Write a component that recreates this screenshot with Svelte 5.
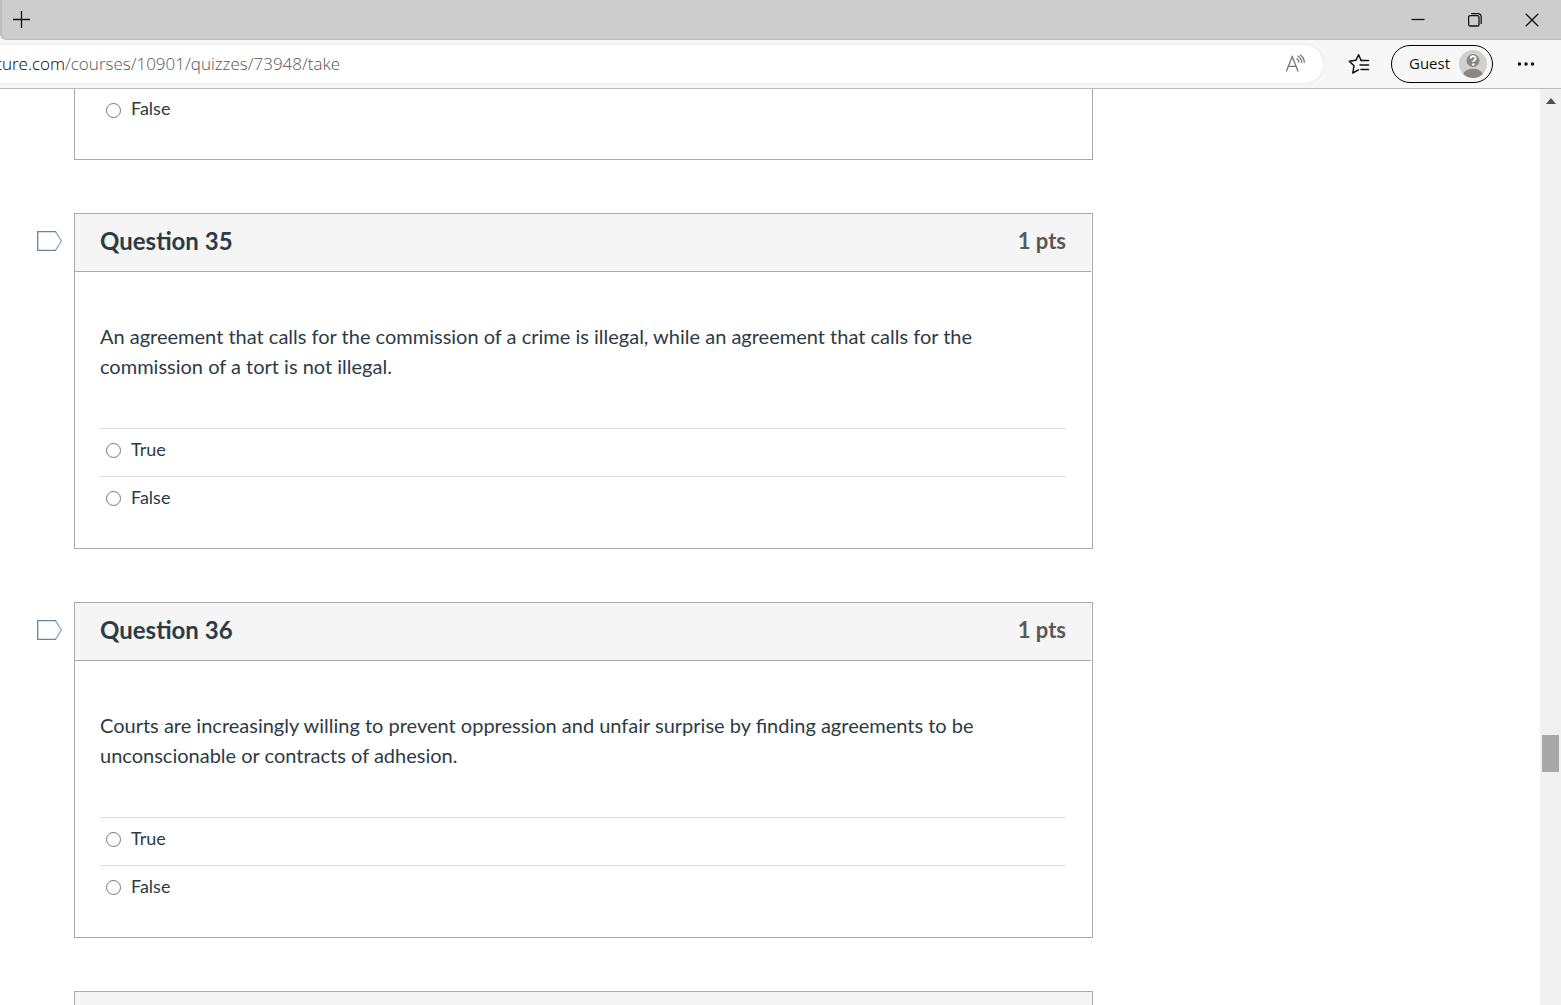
<script>
    let questions = $state([
        {
            id: 35,
            points: 1,
            text: "An agreement that calls for the commission of a crime is illegal, while an agreement that calls for the commission of a tort is not illegal.",
            answer: null,
            flagged: false,
        },
        {
            id: 36,
            points: 1,
            text: "Courts are increasingly willing to prevent oppression and unfair surprise by finding agreements to be unconscionable or contracts of adhesion.",
            answer: null,
            flagged: false,
        },
    ]);

    let previousAnswer = $state(null);
    const options = ["True", "False"];
</script>

<div class="window">
    <header class="title-bar">
        <button class="new-tab" aria-label="New tab">
            <svg width="18" height="18" viewBox="0 0 18 18"><path d="M8.5 0v17M0 8.5h17" /></svg>
        </button>
        <div class="window-controls">
            <button aria-label="Minimize">
                <svg width="14" height="14" viewBox="0 0 14 14"><path d="M0.5 6.5h13" /></svg>
            </button>
            <button aria-label="Restore">
                <svg width="14" height="14" viewBox="0 0 14 14">
                    <rect x="0.6" y="2.6" width="10.4" height="10.4" rx="1.6" />
                    <path d="M3 0.7h7.2a3 3 0 0 1 3 3v7.3" />
                </svg>
            </button>
            <button aria-label="Close">
                <svg width="14" height="14" viewBox="0 0 14 14"><path d="M0.7 0.7l12.6 12.6M13.3 0.7L0.7 13.3" /></svg>
            </button>
        </div>
    </header>

    <div class="toolbar">
        <div class="address">
            <div class="host"><span>ture.com</span></div>
            <div class="path">/courses/10901/quizzes/73948/take</div>
            <button class="read-aloud" aria-label="Read aloud">
                <svg width="22" height="20" viewBox="0 0 22 20">
                    <path d="M1.3 17.5L7.2 2.5l5.9 15M3.3 12.3h7.8" />
                    <path d="M11.6 4.4c1.5 1 2.3 2.4 2.4 4.2M12.6 1.8c2.6 1.6 4 3.8 4.2 6.8M15 0.8c2.8 1.8 4.3 4.6 4.4 8" />
                </svg>
            </button>
        </div>
        <button class="favorites" aria-label="Favorites">
            <svg width="22" height="22" viewBox="0 0 22 22">
                <path d="M13.2 7.5L10.6 1.8 7.8 7.3 1.3 8.2l4.7 4.6L4.8 20l5.6-3.1" />
                <path d="M13.2 7.5H20.5M12 12h8.5M13 16.5h7.5" />
            </svg>
        </button>
        <button class="profile">
            <span>Guest</span>
            <svg width="28" height="28" viewBox="0 0 28 28">
                <circle cx="14" cy="14" r="14" fill="#d2d0ce" />
                <circle cx="14" cy="10.5" r="6.5" fill="#8a8785" />
                <path d="M4.2 24a10 6.4 0 0 1 19.6 0A14 14 0 0 1 4.2 24z" fill="#8a8785" />
                <path d="M11.6 8.6c0-3.2 5-3.2 5-.2 0 1.8-2.4 1.8-2.4 3.6" fill="none" stroke="#fff" stroke-width="1.9" />
                <circle cx="14.2" cy="14.4" r="1.2" fill="#fff" />
            </svg>
        </button>
        <button class="menu" aria-label="Settings and more">
            <svg width="18" height="4" viewBox="0 0 18 4">
                <circle cx="2.5" cy="2" r="1.7" />
                <circle cx="9" cy="2" r="1.7" />
                <circle cx="15.5" cy="2" r="1.7" />
            </svg>
        </button>
    </div>

    <div class="viewport">
        <main class="quiz">
            <section class="question previous">
                <label class="answer">
                    <input type="radio" name="question-34" value="False" bind:group={previousAnswer} />
                    False
                </label>
            </section>

            {#each questions as question (question.id)}
                <div class="question-row">
                    <button
                        class="flag"
                        class:flagged={question.flagged}
                        aria-label="Flag question {question.id}"
                        onclick={() => (question.flagged = !question.flagged)}
                    >
                        <svg width="26" height="20" viewBox="0 0 26 20">
                            <path d="M18.5 0.7L24.4 10l-5.9 9.3" stroke="#8fa9bf" />
                            <path d="M19 0.7H0.7v18.6H19" stroke="#5f88a6" />
                        </svg>
                    </button>
                    <section class="question">
                        <div class="question-header">
                            <h2>Question {question.id}</h2>
                            <span class="points">{question.points} pts</span>
                        </div>
                        <div class="question-body">
                            <p>{question.text}</p>
                            {#each options as option}
                                <label class="answer">
                                    <input type="radio" name="question-{question.id}" value={option} bind:group={question.answer} />
                                    {option}
                                </label>
                            {/each}
                        </div>
                    </section>
                </div>
            {/each}

            <section class="question next"></section>
        </main>

        <div class="scrollbar">
            <button class="scroll-up" aria-label="Scroll up">
                <svg width="10" height="6" viewBox="0 0 10 6"><path d="M5 0l5 6H0z" /></svg>
            </button>
            <div class="thumb"></div>
        </div>
    </div>
</div>

<style>
    :global(body) {
        background: #fff;
    }

    * {
        box-sizing: border-box;
    }

    button {
        display: flex;
        align-items: center;
        justify-content: center;
        padding: 0;
        border: none;
        background: none;
        cursor: pointer;
    }

    svg {
        display: block;
        flex-shrink: 0;
    }

    .window {
        display: flex;
        flex-direction: column;
        height: 100vh;
        overflow: hidden;
        color: #2d3b45;
        font-family: Lato, sans-serif;
    }

    /* Browser frame */
    .title-bar {
        display: flex;
        justify-content: space-between;
        height: 40px;
        flex-shrink: 0;
        background: #cdcdcd;
        border-bottom: 1px solid #bdbdbd;
        border-left: 2px solid #bdbdbd;
        border-bottom-left-radius: 6px;
    }

    .title-bar svg {
        fill: none;
        stroke: #111;
        stroke-width: 1.3;
    }

    .new-tab {
        width: 40px;
    }

    .window-controls {
        display: flex;
        padding-right: 1px;
    }

    .window-controls button {
        width: 57px;
    }

    .toolbar {
        display: flex;
        align-items: center;
        height: 49px;
        flex-shrink: 0;
        background: #f7f7f7;
        border-bottom: 1px solid #bbb;
        font-family: "Open Sans", sans-serif;
    }

    .address {
        display: flex;
        align-items: center;
        flex: 1;
        height: 38px;
        background: #fff;
        border-radius: 0 19px 19px 0;
        box-shadow: 0 0 4px rgba(0, 0, 0, 0.08);
        font-size: 17px;
        font-weight: 300;
        line-height: 24px;
    }

    .host {
        display: flex;
        justify-content: flex-end;
        width: 65px;
        overflow: hidden;
        color: #000;
    }

    .path {
        color: #555;
    }

    .read-aloud {
        margin-left: auto;
        margin-right: 16px;
    }

    .read-aloud svg {
        fill: none;
        stroke: #777;
        stroke-width: 1.3;
    }

    .favorites {
        width: 68px;
        padding-left: 4px;
    }

    .favorites svg {
        fill: none;
        stroke: #111;
        stroke-width: 1.5;
        stroke-linejoin: round;
        stroke-linecap: round;
    }

    .profile {
        justify-content: space-between;
        width: 102px;
        height: 38px;
        padding: 0 5px 0 17px;
        border: 1px solid #000;
        border-radius: 19px;
        color: #111;
        font-family: "Open Sans", sans-serif;
        font-size: 15px;
        line-height: 20px;
    }

    .profile span {
        padding-bottom: 2px;
    }

    .menu {
        width: 68px;
        padding-right: 2px;
    }

    /* Page */
    .viewport {
        display: flex;
        flex: 1;
        min-height: 0;
    }

    .quiz {
        display: flex;
        flex-direction: column;
        gap: 53px;
        flex: 1;
        padding: 0 447px 0 37px;
        overflow: hidden;
    }

    .question-row {
        display: flex;
        align-items: flex-start;
    }

    .flag {
        width: 26px;
        margin: 18px 11px 0 0;
    }

    .flag svg {
        fill: none;
        stroke-width: 1.3;
    }

    .flagged svg {
        fill: #fc5e13;
    }

    .question {
        flex: 1;
        border: 1px solid #aaa;
    }

    .previous {
        flex: none;
        height: 71px;
        margin-left: 37px;
        padding: 0 25px;
        border-top: none;
    }

    .next {
        flex: none;
        height: 336px;
        margin-left: 37px;
        background: #f5f5f5;
    }

    .question-header {
        display: flex;
        align-items: center;
        justify-content: space-between;
        height: 58px;
        margin-right: 1px;
        padding: 0 25px 4px;
        background: #f5f5f5;
        border-bottom: 1px solid #aaa;
    }

    h2 {
        margin: 0;
        font-size: 24px;
        line-height: 30px;
    }

    .points {
        color: #595959;
        font-size: 22px;
        font-weight: bold;
        line-height: 30px;
    }

    .question-body {
        padding: 49px 26px 24px 25px;
    }

    p {
        margin: 0 0 47px;
        font-size: 20px;
        line-height: 30px;
    }

    .answer {
        display: flex;
        align-items: center;
        gap: 10px;
        height: 48px;
        padding: 0 6px 8px;
        border-top: 1px solid #ddd;
        font-size: 18px;
        line-height: 24px;
    }

    .previous .answer {
        height: 46px;
        border-top: none;
    }

    .answer input {
        appearance: none;
        width: 15px;
        height: 15px;
        margin: 4px 0 0;
        border: 1px solid #767676;
        border-radius: 50%;
        background: #fff;
    }

    .answer input:checked {
        border: 4px solid #0374b5;
    }

    .scrollbar {
        display: grid;
        grid-template-rows: 24px 622fr 37px 233fr;
        width: 21px;
        padding: 0 2px;
        background: #f0f0f0;
    }

    .scroll-up svg {
        fill: #505050;
    }

    .thumb {
        grid-row: 3;
        background: #a8a8a8;
    }
</style>
